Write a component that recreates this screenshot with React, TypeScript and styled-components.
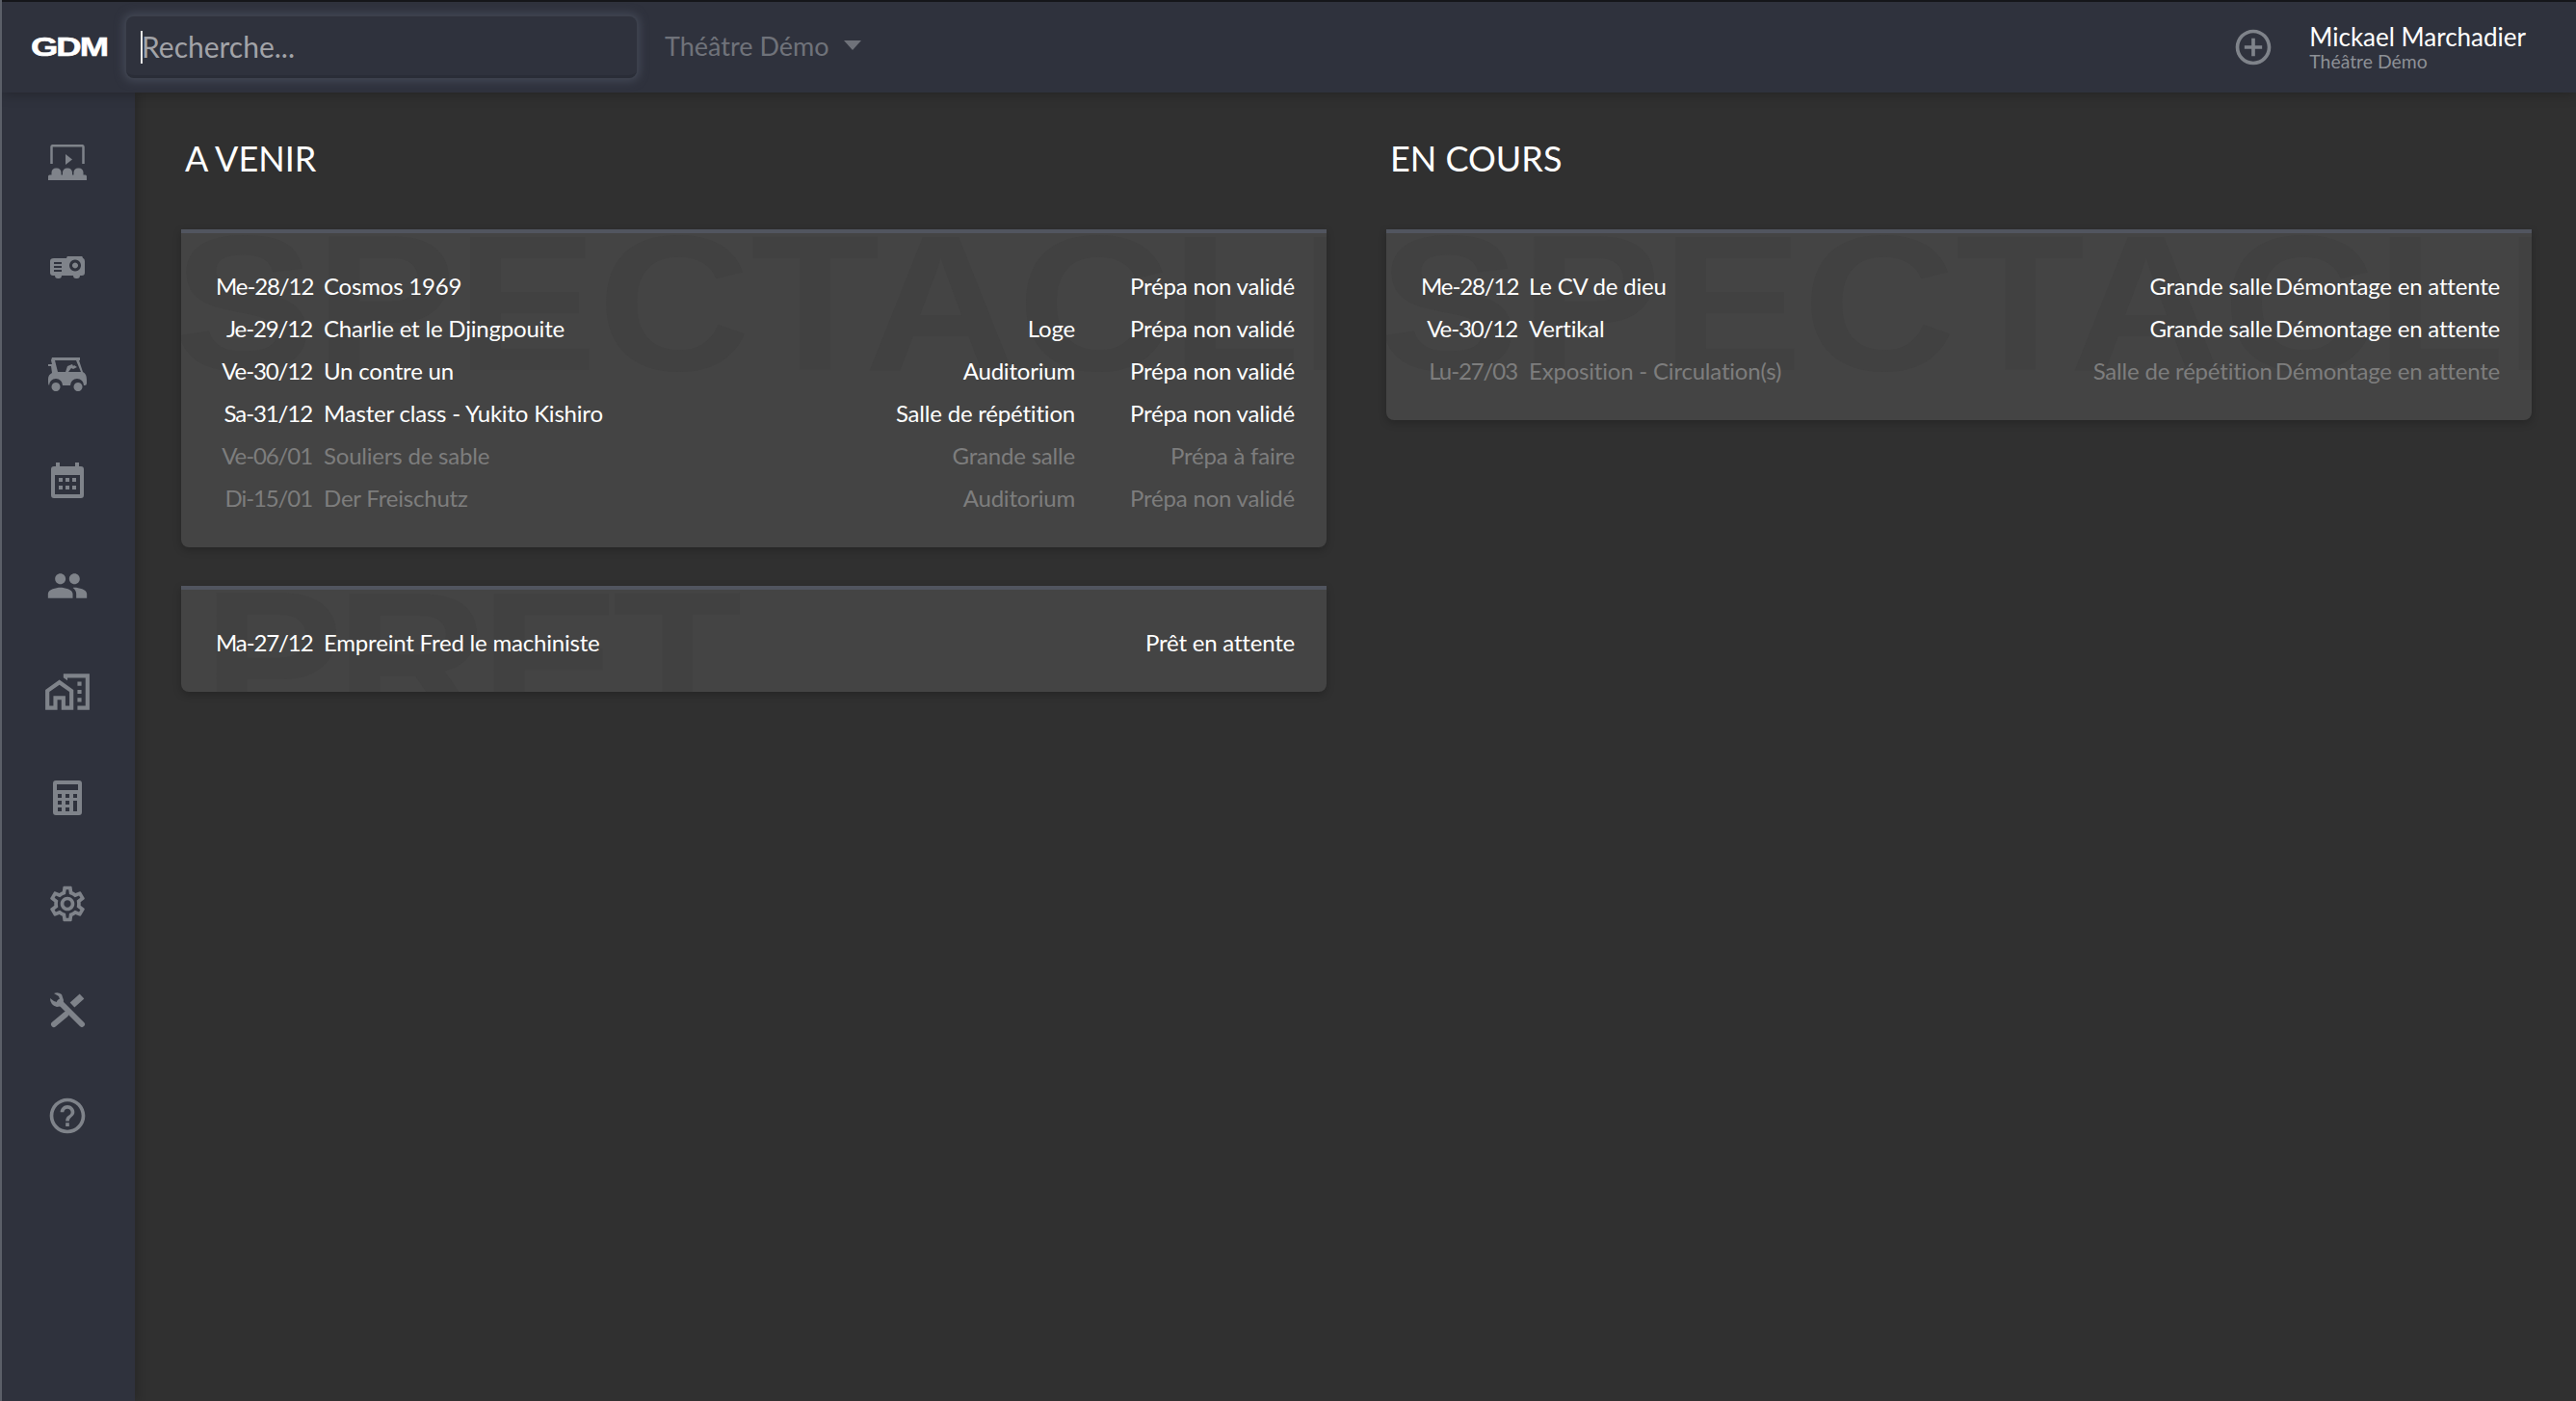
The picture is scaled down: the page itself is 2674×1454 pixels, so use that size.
import React from "react";
import styled, { createGlobalStyle } from "styled-components";
import {
  MdGroup,
  MdOutlineMapsHomeWork,
  MdOutlineSettings,
  MdHelpOutline,
  MdAddCircleOutline,
} from "react-icons/md";

const GlobalStyle = createGlobalStyle`
  html, body {
    margin: 0;
    padding: 0;
    background: #303030;
  }
  * {
    box-sizing: border-box;
  }
`;

const Page = styled.div`
  display: flex;
  flex-direction: column;
  width: 100vw;
  height: 100vh;
  overflow: hidden;
  background: #303030;
  color: #fff;
  font-family: Lato, "Open Sans", sans-serif;
  border-left: 2px solid #5b5f68;
`;

const TopBar = styled.header`
  position: relative;
  z-index: 2;
  display: flex;
  align-items: center;
  flex: 0 0 96px;
  background: #2f323d;
  border-top: 2px solid #15161a;
  box-shadow: 0 2px 12px rgba(0, 0, 0, 0.25);
`;

const Logo = styled.div`
  width: 129px;
  padding-left: 30px;
  font-family: "Liberation Sans", sans-serif;
  font-weight: 700;
  font-size: 28px;
  letter-spacing: -1.5px;
  -webkit-text-stroke: 0.6px #fff;
  transform: scaleX(1.3);
  transform-origin: 30px 50%;
  color: #fff;
`;

const SearchBox = styled.div`
  position: relative;
  width: 530px;
  height: 64px;
  border-radius: 8px;
  background: #2f323d;
  box-shadow: 0 0 0 2px #3c404c, 0 0 10px 3px #444957;
  border-bottom: 3px solid #2a2d37;
`;

const SearchInput = styled.input`
  width: 100%;
  height: 100%;
  padding: 0 0 0 16px;
  background: transparent;
  border: none;
  outline: none;
  font-family: Lato, sans-serif;
  font-size: 30px;
  color: #fff;
  &::placeholder {
    color: #a2a3a8;
    opacity: 1;
  }
`;

const Caret = styled.span`
  position: absolute;
  left: 15px;
  top: 15px;
  width: 2px;
  height: 34px;
  background: #e8e8e8;
`;

const TheatreSelect = styled.div`
  display: flex;
  align-items: center;
  gap: 15px;
  margin: 0 0 4px 29px;
  font-size: 27px;
  color: #6f727a;
`;

const Arrow = styled.span`
  width: 0;
  height: 0;
  border-left: 9px solid transparent;
  border-right: 9px solid transparent;
  border-top: 10px solid #6f727a;
`;

const TopRight = styled.div`
  display: flex;
  align-items: center;
  margin-left: auto;
  padding-right: 52px;
  gap: 36px;
  color: #7f838a;
`;

const User = styled.div`
  display: flex;
  flex-direction: column;
`;

const UserName = styled.div`
  font-size: 26px;
  line-height: 30px;
  color: #fff;
`;

const UserTheatre = styled.div`
  font-size: 19.4px;
  line-height: 22px;
  color: #8d9096;
`;

const Body = styled.div`
  display: flex;
  flex: 1;
  min-height: 0;
`;

const SideBar = styled.nav`
  display: flex;
  flex-direction: column;
  flex: 0 0 138px;
  padding: 17px 2px 0 0;
  background: #2f323d;
  box-shadow: 2px 0 10px rgba(0, 0, 0, 0.2);
`;

const NavItem = styled.a`
  display: flex;
  align-items: center;
  justify-content: center;
  height: 110px;
  color: #7f838a;
`;

const Main = styled.main`
  display: grid;
  grid-template-columns: 1fr 1fr;
  align-items: start;
  gap: 62px;
  flex: 1;
  padding: 0 46px 0 48px;
`;

const Column = styled.section`
  display: flex;
  flex-direction: column;
  gap: 40px;
`;

const Heading = styled.h2`
  margin: 0 0 -2px;
  height: 104px;
  padding: 46px 0 0 4px;
  font-size: 36px;
  line-height: 44px;
  font-weight: 400;
  color: #fff;
`;

const Card = styled.div`
  position: relative;
  overflow: hidden;
  padding: 32px 33px 30px 36px;
  background: #444444;
  border-top: 4px solid #51555f;
  border-radius: 0 0 8px 8px;
  box-shadow: 0 3px 8px rgba(0, 0, 0, 0.22);
`;

const Watermark = styled.div<{ $left: number; $spacing: number }>`
  position: absolute;
  left: ${(props) => props.$left}px;
  top: 1px;
  white-space: nowrap;
  font-family: "Liberation Sans", sans-serif;
  font-weight: 700;
  font-size: 200px;
  line-height: 143px;
  letter-spacing: ${(props) => props.$spacing}px;
  color: #414141;
  transform: scaleX(1.1);
  transform-origin: 0 0;
  user-select: none;
`;

const Row = styled.div<{ $dim?: boolean }>`
  position: relative;
  display: grid;
  grid-template-columns: 100px 1fr auto minmax(228px, max-content);
  align-items: center;
  height: 44px;
  font-size: 24px;
  letter-spacing: -0.2px;
  white-space: nowrap;
  color: ${(props) => (props.$dim ? "#7d7d7d" : "#fff")};
`;

const DateCell = styled.span`
  letter-spacing: -1.1px;
  text-align: right;
`;

const Title = styled.span`
  margin-left: 12px;
`;

const Status = styled.span`
  padding-left: 3px;
  text-align: right;
`;

const TheatreIcon = () => (
  <svg width="40" height="37" viewBox="0 0 40 37" fill="currentColor">
    <path d="M3.500 20V2.500q0-1.300 1.300-1.300h30.400q1.300 0 1.300 1.300V20" fill="none" stroke="currentColor" strokeWidth="2.500" />
    <path d="M18 10l7 5.500-7 5.500z" />
    <path d="M0 37v-4q0-1.500 1.500-1.500H3.500V29a4.500 4.500 0 0 1 4.500-4.500h1A4.500 4.500 0 0 1 13.500 29V31.500h1.500V29a4.500 4.500 0 0 1 4.500-4.500h1A4.500 4.500 0 0 1 25 29V31.500h1.500V29a4.500 4.500 0 0 1 4.500-4.500h1A4.500 4.500 0 0 1 36.500 29V31.500h2q1.500 0 1.500 1.500v4z" />
  </svg>
);

const ProjectorIcon = () => (
  <svg width="36" height="24" viewBox="0 0 36 24" fill="currentColor" fillRule="evenodd">
    <path d="M4 2h13a9 9 0 0 1 17-.2Q36 2.500 36 5v12q0 3-3 3h-2q0 3-3 3h-1q-3 0-3-3H12q0 3-3 3H8q-3 0-3-3H3q-3 0-3-3V5q0-3 4-3zM26 3.500a6 6 0 1 0 .01 0zM26 6.500a3 3 0 1 1-.01 0zM4 6v2h8V6zM4 10v2h8v-2zM4 14v2h8v-2z" />
  </svg>
);

const CartIcon = () => (
  <svg width="40" height="35" viewBox="0 0 40 35" fill="currentColor" fillRule="evenodd">
    <path d="M4 0h29v3h-1l4 12q4 2 4 8v4q0 2-2 2h-1a7 7 0 0 0-14 0H15a7 7 0 0 0-14 0q-1-1-1-3v-4q0-4 4-6L3 9H0V7h4L3 3zM7 3l3 12h8l2-6 5-2 1 2 1-1 3 2-4 2-2-1-3 4h13L29 3zM8 26a4.500 4.500 0 1 0 .01 0zM31 26a4.500 4.500 0 1 0 .01 0z" />
  </svg>
);

const CalendarIcon = () => (
  <svg width="34" height="37" viewBox="0 0 34 37" fill="currentColor" fillRule="evenodd">
    <path d="M5 0h4v4h16V0h4v4h2q3 0 3 3v27q0 3-3 3H3q-3 0-3-3V7q0-3 3-3h2zM4 13v20h26V13zM8 16h4v4H8zM15 16h4v4h-4zM22 16h4v4h-4zM8 24h4v4H8zM15 24h4v4h-4zM22 24h4v4h-4z" />
  </svg>
);

const CalculatorIcon = () => (
  <svg width="30" height="36" viewBox="0 0 30 36" fill="currentColor" fillRule="evenodd">
    <path d="M3 0h24q3 0 3 3v30q0 3-3 3H3q-3 0-3-3V3q0-3 3-3zM4 4v6h22V4zM5 14v4h4v-4zM13 14v4h4v-4zM21 14v4h4v-4zM5 21v4h4v-4zM13 21v4h4v-4zM21 21v11h4V21zM5 28v4h4v-4zM13 28v4h4v-4z" />
  </svg>
);

const ToolsIcon = () => (
  <svg width="38" height="37" viewBox="0 0 38 37" fill="currentColor" stroke="currentColor" strokeLinecap="round">
    <path d="M11 10l23 23" fill="none" strokeWidth="6" />
    <path d="M1 6q0 7 7 9l6-1 1-6-2-6Q9-1 5 1l5 3 1 3-3 3-3-1z" stroke="none" />
    <path d="M24 13l10-9" fill="none" strokeWidth="7" strokeLinecap="butt" />
    <path d="M5 33l12-10" fill="none" strokeWidth="6" />
  </svg>
);

const navIcons = [
  <TheatreIcon key="theatre" />,
  <ProjectorIcon key="projector" />,
  <CartIcon key="cart" />,
  <CalendarIcon key="calendar" />,
  <MdGroup key="group" size={44} />,
  <MdOutlineMapsHomeWork key="home" size={50} />,
  <CalculatorIcon key="calculator" />,
  <MdOutlineSettings key="settings" size={44} />,
  <ToolsIcon key="tools" />,
  <MdHelpOutline key="help" size={44} />,
];

type Item = {
  date: string;
  title: string;
  place?: string;
  status: string;
  dim?: boolean;
};

const upcoming: Item[] = [
  { date: "Me-28/12", title: "Cosmos 1969", status: "Prépa non validé" },
  { date: "Je-29/12", title: "Charlie et le Djingpouite", place: "Loge", status: "Prépa non validé" },
  { date: "Ve-30/12", title: "Un contre un", place: "Auditorium", status: "Prépa non validé" },
  { date: "Sa-31/12", title: "Master class - Yukito Kishiro", place: "Salle de répétition", status: "Prépa non validé" },
  { date: "Ve-06/01", title: "Souliers de sable", place: "Grande salle", status: "Prépa à faire", dim: true },
  { date: "Di-15/01", title: "Der Freischutz", place: "Auditorium", status: "Prépa non validé", dim: true },
];

const loans: Item[] = [
  { date: "Ma-27/12", title: "Empreint Fred le machiniste", status: "Prêt en attente" },
];

const running: Item[] = [
  { date: "Me-28/12", title: "Le CV de dieu", place: "Grande salle", status: "Démontage en attente" },
  { date: "Ve-30/12", title: "Vertikal", place: "Grande salle", status: "Démontage en attente" },
  { date: "Lu-27/03", title: "Exposition - Circulation(s)", place: "Salle de répétition", status: "Démontage en attente", dim: true },
];

function ItemCard({
  mark,
  markLeft,
  markSpacing = 0,
  items,
}: {
  mark: string;
  markLeft: number;
  markSpacing?: number;
  items: Item[];
}) {
  return (
    <Card>
      <Watermark aria-hidden="true" $left={markLeft} $spacing={markSpacing}>
        {mark}
      </Watermark>
      {items.map((item) => (
        <Row key={item.date + item.title} $dim={item.dim}>
          <DateCell>{item.date}</DateCell>
          <Title>{item.title}</Title>
          <span>{item.place}</span>
          <Status>{item.status}</Status>
        </Row>
      ))}
    </Card>
  );
}

export default function App() {
  return (
    <Page>
      <GlobalStyle />
      <TopBar>
        <Logo>GDM</Logo>
        <SearchBox>
          <SearchInput placeholder="Recherche..." readOnly />
          <Caret />
        </SearchBox>
        <TheatreSelect>
          Théâtre Démo
          <Arrow />
        </TheatreSelect>
        <TopRight>
          <MdAddCircleOutline size={44} />
          <User>
            <UserName>Mickael Marchadier</UserName>
            <UserTheatre>Théâtre Démo</UserTheatre>
          </User>
        </TopRight>
      </TopBar>
      <Body>
        <SideBar>
          {navIcons.map((icon) => (
            <NavItem key={icon.key}>{icon}</NavItem>
          ))}
        </SideBar>
        <Main>
          <Column>
            <Heading>A VENIR</Heading>
            <ItemCard mark="SPECTACLE" markLeft={-8} items={upcoming} />
            <ItemCard mark="PRET" markLeft={22} markSpacing={-8} items={loans} />
          </Column>
          <Column>
            <Heading>EN COURS</Heading>
            <ItemCard mark="SPECTACLE" markLeft={-8} items={running} />
          </Column>
        </Main>
      </Body>
    </Page>
  );
}
